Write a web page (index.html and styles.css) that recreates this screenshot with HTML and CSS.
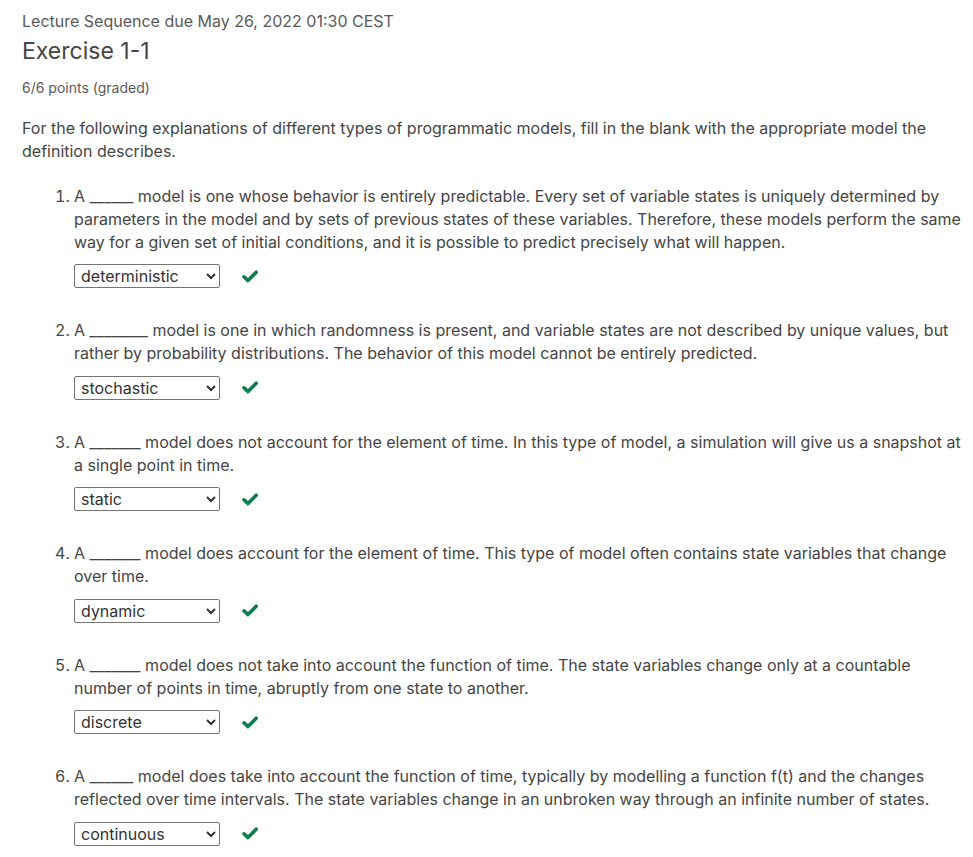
FILE: index.html
```html
<!DOCTYPE html>
<html lang="en">
<head>
<meta charset="utf-8">
<title>Exercise 1-1</title>
<link rel="stylesheet" href="styles.css">
</head>
<body>
<main class="problem">
  <header class="problem-header">
    <p class="due">Lecture Sequence due May 26, 2022 01:30 CEST</p>
    <h2 class="title">Exercise 1-1</h2>
    <p class="points">6/6 points (graded)</p>
  </header>
  <p class="intro">For the following explanations of different types of programmatic models, fill in the blank with the appropriate model the definition describes.</p>
  <ol class="questions">
    <li class="question">
      <p class="q-text">A ______ model is one whose behavior is entirely predictable. Every set of variable states is uniquely determined by parameters in the model and by sets of previous states of these variables. Therefore, these models perform the same way for a given set of initial conditions, and it is possible to predict precisely what will happen.</p>
      <div class="answer">
        <select class="choice"><option>deterministic</option></select>
        <svg class="check" viewBox="0 0 16 13" width="16" height="13"><path d="M2 6.8 L6 10.6 L14.2 2.2" fill="none" stroke="#0d7d4d" stroke-width="3.6" stroke-linecap="round" stroke-linejoin="round"/></svg>
      </div>
    </li>
    <li class="question">
      <p class="q-text">A ________ model is one in which randomness is present, and variable states are not described by unique values, but rather by probability distributions. The behavior of this model cannot be entirely predicted.</p>
      <div class="answer">
        <select class="choice"><option>stochastic</option></select>
        <svg class="check" viewBox="0 0 16 13" width="16" height="13"><path d="M2 6.8 L6 10.6 L14.2 2.2" fill="none" stroke="#0d7d4d" stroke-width="3.6" stroke-linecap="round" stroke-linejoin="round"/></svg>
      </div>
    </li>
    <li class="question">
      <p class="q-text">A _______ model does not account for the element of time. In this type of model, a simulation will give us a snapshot at a single point in time.</p>
      <div class="answer">
        <select class="choice"><option>static</option></select>
        <svg class="check" viewBox="0 0 16 13" width="16" height="13"><path d="M2 6.8 L6 10.6 L14.2 2.2" fill="none" stroke="#0d7d4d" stroke-width="3.6" stroke-linecap="round" stroke-linejoin="round"/></svg>
      </div>
    </li>
    <li class="question">
      <p class="q-text">A _______ model does account for the element of time. This type of model often contains state variables that change over time.</p>
      <div class="answer">
        <select class="choice"><option>dynamic</option></select>
        <svg class="check" viewBox="0 0 16 13" width="16" height="13"><path d="M2 6.8 L6 10.6 L14.2 2.2" fill="none" stroke="#0d7d4d" stroke-width="3.6" stroke-linecap="round" stroke-linejoin="round"/></svg>
      </div>
    </li>
    <li class="question">
      <p class="q-text">A _______ model does not take into account the function of time. The state variables change only at a countable number of points in time, abruptly from one state to another.</p>
      <div class="answer">
        <select class="choice"><option>discrete</option></select>
        <svg class="check" viewBox="0 0 16 13" width="16" height="13"><path d="M2 6.8 L6 10.6 L14.2 2.2" fill="none" stroke="#0d7d4d" stroke-width="3.6" stroke-linecap="round" stroke-linejoin="round"/></svg>
      </div>
    </li>
    <li class="question">
      <p class="q-text">A ______ model does take into account the function of time, typically by modelling a function f(t) and the changes reflected over time intervals. The state variables change in an unbroken way through an infinite number of states.</p>
      <div class="answer">
        <select class="choice"><option>continuous</option></select>
        <svg class="check" viewBox="0 0 16 13" width="16" height="13"><path d="M2 6.8 L6 10.6 L14.2 2.2" fill="none" stroke="#0d7d4d" stroke-width="3.6" stroke-linecap="round" stroke-linejoin="round"/></svg>
      </div>
    </li>
  </ol>
</main>
</body>
</html>
```

FILE: styles.css
```css
html, body {
  margin: 0;
  padding: 0;
  background: #ffffff;
}

body {
  font-family: Inter, "Noto Sans", sans-serif;
  color: #454545;
}

.problem {
  padding: 11px 11px 0 22px;
}

.problem-header p,
.problem-header h2 {
  margin: 0;
}

.due {
  font-size: 16px;
  line-height: 20px;
  color: #5a5a5a;
}

.title {
  font-size: 23px;
  font-weight: 400;
  line-height: 28px;
  margin-top: 6px !important;
  color: #454545;
}

.points {
  font-size: 14px;
  line-height: 18px;
  margin-top: 14px !important;
  color: #5a5a5a;
}

.intro {
  font-size: 16px;
  line-height: 23px;
  margin: 20px 0 0;
}

.questions {
  margin: 22px 0 0;
  padding-left: 52px;
  font-size: 16px;
  line-height: 22.75px;
}

.question {
  margin-bottom: 31px;
}

.q-text {
  margin: 0;
}

.answer {
  display: flex;
  align-items: center;
  gap: 22px;
  margin-top: 11px;
}

.choice {
  width: 146px;
  height: 24px;
  font-family: Inter, "Noto Sans", sans-serif;
  font-size: 16px;
  color: #333333;
  border: 1px solid #767676;
  border-radius: 2px;
  background: #ffffff;
  padding: 0 2px;
  margin: 0;
}

.check {
  display: block;
}
```
